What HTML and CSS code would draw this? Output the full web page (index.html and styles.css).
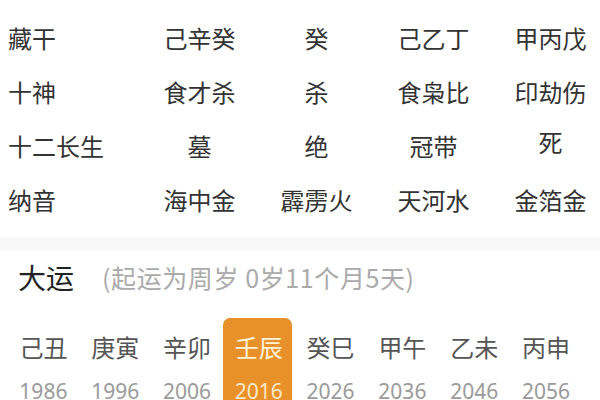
FILE: index.html
```html
<!DOCTYPE html>
<html lang="zh">
<head>
<meta charset="utf-8">
<link rel="stylesheet" href="styles.css">
</head>
<body>
<section class="table">
  <div class="row">
    <div class="label">藏干</div>
    <div class="cell">己辛癸</div>
    <div class="cell">癸</div>
    <div class="cell">己乙丁</div>
    <div class="cell">甲丙戊</div>
  </div>
  <div class="row">
    <div class="label">十神</div>
    <div class="cell">食才杀</div>
    <div class="cell">杀</div>
    <div class="cell">食枭比</div>
    <div class="cell">印劫伤</div>
  </div>
  <div class="row">
    <div class="label">十二长生</div>
    <div class="cell">墓</div>
    <div class="cell">绝</div>
    <div class="cell">冠带</div>
    <div class="cell raised">死</div>
  </div>
  <div class="row">
    <div class="label">纳音</div>
    <div class="cell">海中金</div>
    <div class="cell">霹雳火</div>
    <div class="cell">天河水</div>
    <div class="cell">金箔金</div>
  </div>
</section>
<div class="band"></div>
<section class="dayun">
  <div class="head">
    <span class="title">大运</span>
    <span class="sub">(起运为周岁 0岁11个月5天)</span>
  </div>
  <div class="luck">
    <div class="item"><div class="gz">己丑</div><div class="yr">1986</div></div>
    <div class="item"><div class="gz">庚寅</div><div class="yr">1996</div></div>
    <div class="item"><div class="gz">辛卯</div><div class="yr">2006</div></div>
    <div class="item active"><div class="gz">壬辰</div><div class="yr">2016</div></div>
    <div class="item"><div class="gz">癸巳</div><div class="yr">2026</div></div>
    <div class="item"><div class="gz">甲午</div><div class="yr">2036</div></div>
    <div class="item"><div class="gz">乙未</div><div class="yr">2046</div></div>
    <div class="item"><div class="gz">丙申</div><div class="yr">2056</div></div>
  </div>
</section>
</body>
</html>
```
FILE: styles.css
```css
* { box-sizing: border-box; }
html, body {
  margin: 0;
  padding: 0;
  background: #fff;
  width: 600px;
  height: 400px;
  overflow: hidden;
  font-family: "Noto Sans CJK SC", "Noto Sans", sans-serif;
}
.table {
  padding-top: 11px;
}
.row {
  display: grid;
  grid-template-columns: 141px 117px 117px 117px 117px;
  height: 54px;
  align-items: center;
  font-size: 24px;
  color: #333;
  line-height: 1;
}
.label {
  padding-left: 8px;
  white-space: nowrap;
}
.cell {
  text-align: center;
  white-space: nowrap;
}
.raised {
  margin-top: -8px;
}
.band {
  margin-top: 10px;
  height: 13px;
  background: #f8f8f8;
}
.dayun {
  padding-top: 13px;
}
.head {
  display: flex;
  align-items: center;
  height: 28px;
  padding-left: 18px;
  white-space: nowrap;
}
.title {
  font-size: 28px;
  color: #222;
  line-height: 1;
}
.sub {
  font-size: 25px;
  color: #aaa;
  margin-left: 28px;
  letter-spacing: 0.6px;
  line-height: 1;
}
.luck {
  display: flex;
  padding-left: 6px;
  margin-top: 27px;
}
.item {
  width: 68.8px;
  flex: none;
  text-align: center;
  margin: 0 1.5px;
  padding-top: 16px;
  padding-left: 3px;
  border-radius: 7px 7px 0 0;
  height: 90px;
}
.gz {
  font-size: 24px;
  line-height: 26px;
  color: #555;
  white-space: nowrap;
}
.yr {
  font-size: 21px;
  line-height: 21px;
  margin-top: 21px;
  color: #9a9a9a;
  font-family: "Noto Sans", "Roboto", sans-serif;
}
.active {
  background: #e8912b;
}
.active .gz { color: #fdf1d6; }
.active .yr { color: #fbe7c2; }
```
